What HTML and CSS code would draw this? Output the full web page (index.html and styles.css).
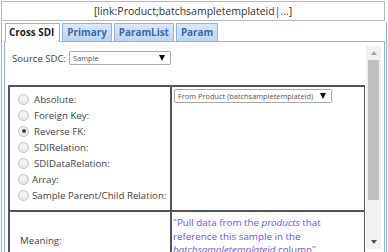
FILE: index.html
```html
<!DOCTYPE html>
<html>
<head>
<meta charset="utf-8">
<link rel="stylesheet" href="styles.css">
</head>
<body>
<div class="top">[link:Product;batchsampletemplateid|...]</div>
<div class="frame">
  <div class="tabs">
    <div class="tab active">Cross SDI</div>
    <div class="tab">Primary</div>
    <div class="tab">ParamList</div>
    <div class="tab">Param</div>
  </div>
  <div class="panel">
    <div class="content">
      <div class="src">
        <span class="lbl">Source SDC:</span>
        <div class="sel sel-src"><span class="val">Sample</span><span class="arr"></span></div>
      </div>
      <table class="grid">
        <colgroup><col class="c1"><col class="c2"></colgroup>
        <tr class="row1">
          <td class="opts">
            <div class="opt"><span class="radio"></span><span class="lbl">Absolute:</span></div>
            <div class="opt"><span class="radio"></span><span class="lbl">Foreign Key:</span></div>
            <div class="opt"><span class="radio checked"></span><span class="lbl">Reverse FK:</span></div>
            <div class="opt"><span class="radio"></span><span class="lbl">SDIRelation:</span></div>
            <div class="opt"><span class="radio"></span><span class="lbl">SDIDataRelation:</span></div>
            <div class="opt alt"><span class="radio"></span><span class="lbl">Array:</span></div>
            <div class="opt alt"><span class="radio"></span><span class="lbl">Sample Parent/Child Relation:</span></div>
          </td>
          <td class="rcell">
            <div class="sel sel-from"><span class="val">From Product (batchsampletemplateid)</span><span class="arr"></span></div>
          </td>
        </tr>
        <tr class="row2">
          <td class="mlabel">Meaning:</td>
          <td class="mtext">"Pull data from the <i>products</i> that reference this sample in the <i>batchsampletemplateid</i> column"</td>
        </tr>
      </table>
    </div>
    <div class="scroll">
      <div class="sbtn"><span class="tri up"></span></div>
      <div class="track"><div class="thumb"></div></div>
      <div class="sbtn"><span class="tri down"></span></div>
    </div>
  </div>
</div>
</body>
</html>
```
FILE: styles.css
```css
html, body {
  margin: 0;
  padding: 0;
  background: #fff;
  width: 388px;
  height: 252px;
  overflow: hidden;
  font-family: "Open Sans", "Liberation Sans", sans-serif;
  color: #444;
}
.top {
  margin: 1px 3px 0 1px;
  height: 18px;
  border: 1px solid #b8b8b8;
  line-height: 18px;
  font-size: 10.5px;
  text-align: center;
  color: #333;
}
.frame {
  margin: 1px 0 0 1px;
  width: 386px;
  box-sizing: border-box;
  border-left: 1px solid #8db4e6;
  border-right: 1px solid #8db4e6;
  padding: 1px 1px 0 2px;
  height: 240px;
}
.tabs {
  display: flex;
  gap: 2px;
  padding-left: 1px;
  height: 18px;
  align-items: flex-end;
}
.tab {
  box-sizing: border-box;
  height: 18px;
  border: 1px solid #8db4e6;
  border-bottom: none;
  background: linear-gradient(#dbe8f8, #bcd4f1);
  font-size: 9.9px;
  font-weight: bold;
  color: #3a6aa8;
  line-height: 17px;
  padding: 0 4px;
  white-space: nowrap;
}
.tab.active {
  position: relative;
  height: 19px;
  margin-bottom: -1px;
  background: #fff;
  color: #222;
  padding: 0 5px 0 3px;
}
.panel {
  border: 1px solid #8db4e6;
  border-bottom: none;
  display: flex;
  height: 230px;
}
.content {
  flex: 1;
  padding: 0 0 0 3px;
  overflow: hidden;
}
.src {
  display: flex;
  align-items: center;
  gap: 3px;
  padding: 9px 0 0 4px;
  height: 14px;
  font-size: 9.6px;
}
.sel {
  box-sizing: border-box;
  height: 14px;
  border: 1px solid #a9a9a9;
  border-radius: 2px;
  background: #fff;
  display: flex;
  align-items: center;
  justify-content: space-between;
  padding: 0 5px 0 3px;
  font-size: 7.4px;
  color: #555;
  white-space: nowrap;
}
.sel-src { width: 102px; }
.sel-from { width: 158px; }
.arr {
  width: 0;
  height: 0;
  border-left: 3.5px solid transparent;
  border-right: 3.5px solid transparent;
  border-top: 6px solid #111;
}
.grid {
  margin-top: 20px;
  border-collapse: collapse;
  table-layout: fixed;
  width: 358px;
  border: 2px solid #555;
}
.c1 { width: 162px; }
.grid td {
  border: 2px solid #555;
  padding: 0;
  vertical-align: top;
}
.opts {
  height: 125px;
  box-sizing: border-box;
  padding: 4px 0 0 8px !important;
}
.opt {
  display: flex;
  align-items: center;
  height: 16px;
  gap: 5px;
  font-size: 9.7px;
  white-space: nowrap;
}
.opt.alt { gap: 3px; }
.radio {
  width: 11px;
  height: 11px;
  box-sizing: border-box;
  border-radius: 50%;
  border: 1px solid #c4c4c4;
  background: radial-gradient(circle at 40% 35%, #fafafa, #dcdcdc);
  position: relative;
  flex: none;
}
.radio.checked::after {
  content: "";
  position: absolute;
  left: 2.5px;
  top: 2.5px;
  width: 4px;
  height: 4px;
  border-radius: 50%;
  background: #444;
}
.rcell {
  padding: 2px 0 0 2px !important;
}
.mlabel {
  vertical-align: middle !important;
  padding-left: 10px !important;
  font-size: 9.7px;
}
.mtext {
  padding: 4px 14px 12px 1px !important;
  font-size: 9.8px;
  line-height: 13.5px;
  color: #7050ee;
}
.scroll {
  width: 15px;
  flex: none;
  margin: 4px 3px 0 1px;
  height: 203px;
  background: #f1f1f1;
  display: flex;
  flex-direction: column;
}
.sbtn {
  height: 14px;
  display: flex;
  align-items: center;
  justify-content: center;
}
.track {
  flex: 1;
  display: flex;
  flex-direction: column;
  padding: 0 2px;
}
.thumb {
  height: 140px;
  background: #c1c1c1;
}
.tri {
  width: 0;
  height: 0;
  border-left: 3.5px solid transparent;
  border-right: 3.5px solid transparent;
}
.tri.up { border-bottom: 4px solid #a3a3a3; }
.tri.down { border-top: 4px solid #505050; }
```
